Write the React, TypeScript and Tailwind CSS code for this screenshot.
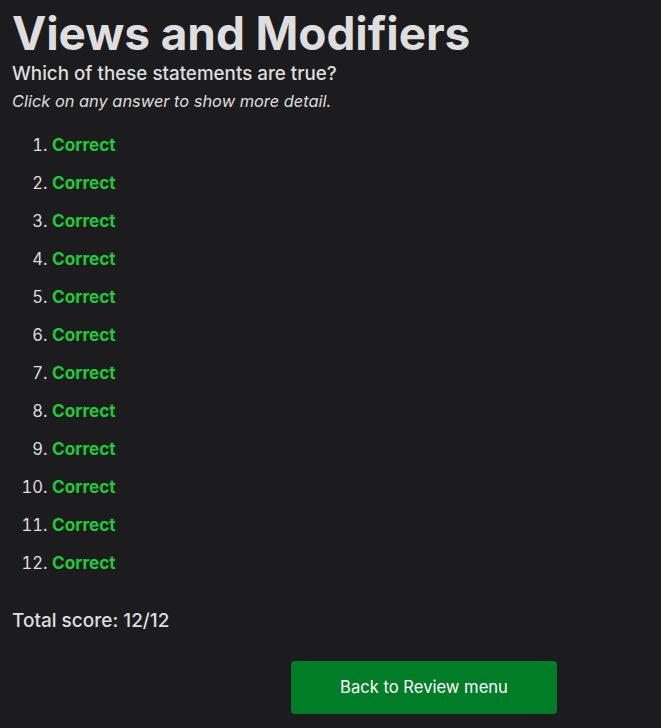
import React from "react";

export default function App() {
  const items = Array.from({ length: 12 }, (_, i) => i + 1);
  return (
    <div
      className="min-h-[728px] w-full bg-[#1c1c1e] text-[#dedede] px-[12px] pt-[4px]"
      style={{ fontFamily: "Inter, 'Noto Sans', sans-serif" }}
    >
      <h1 className="text-[46px] font-bold leading-[58px] tracking-[-0.1px]">Views and Modifiers</h1>
      <p className="text-[18.8px] font-medium leading-[24px]">Which of these statements are true?</p>
      <p className="text-[16.4px] italic leading-[24px] mt-[3px]">Click on any answer to show more detail.</p>
      <ol className="list-decimal pl-[40px] mt-[22px]">
        {items.map((n) => (
          <li key={n} className="text-[16.6px] leading-[20px] mb-[18px] marker:text-[#dedede]">
            <span className="font-bold text-[17.2px] text-[#20c937]">Correct</span>
          </li>
        ))}
      </ol>
      <p className="text-[19px] font-medium leading-[22px] mt-[37px]">Total score: 12/12</p>
      <div className="mt-[29px] flex">
        <button className="ml-[279px] w-[266px] h-[53px] rounded-[4px] bg-[#017c27] text-white text-[16.6px]">
          Back to Review menu
        </button>
      </div>
    </div>
  );
}
